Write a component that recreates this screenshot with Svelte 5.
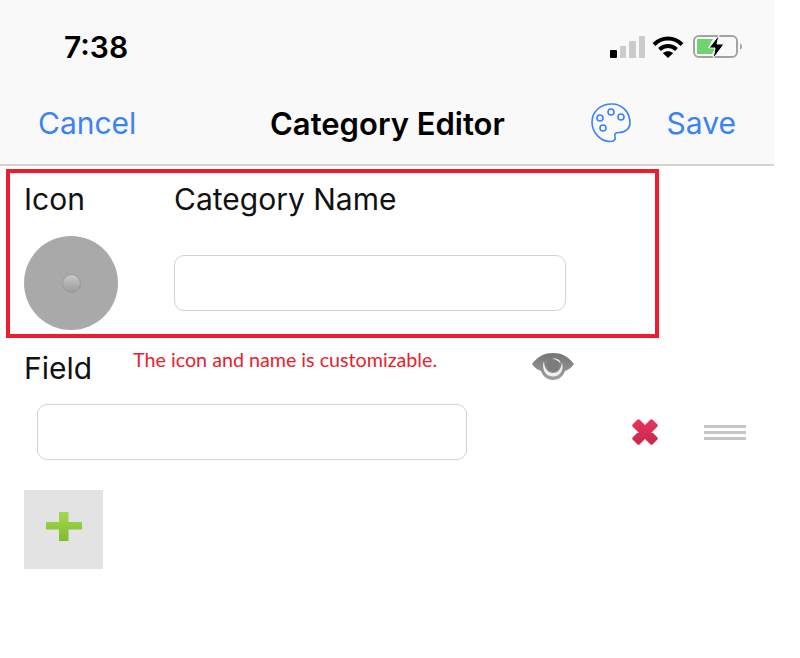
<script lang="ts">
	const signalBars = [
		{ height: 8, on: true },
		{ height: 12, on: false },
		{ height: 17, on: false },
		{ height: 22, on: false },
	]
</script>

<div class="screen">
	<header class="top">
		<div class="status">
			<span class="time">7:38</span>
			<div class="status-icons">
				<div class="signal">
					{#each signalBars as bar}
						<span class:on={bar.on} style={`height: ${bar.height}px`}></span>
					{/each}
				</div>
				<svg class="wifi" width="32" height="24" viewBox="0 0 32 24">
					<path d="M2 9.500C10 1.500 22 1.500 30 9.500" fill="none" stroke="#000" stroke-width="4" />
					<path d="M7.500 14.500C12.500 9.800 19.500 9.800 24.500 14.500" fill="none" stroke="#000" stroke-width="4" />
					<path d="M11 18.200C14 15.600 18 15.600 21 18.200L16 23Z" fill="#000" />
				</svg>
				<svg class="battery" width="50" height="26" viewBox="0 0 50 26">
					<rect x="1" y="2" width="43" height="21" rx="5" fill="none" stroke="#a3a3a3" stroke-width="2" />
					<path d="M4 5H20L15 14H22L19 20H4Z" fill="#6fd46f" />
					<path d="M47 9.500c1.500 .5 2 1.500 2 3s-.5 2.500-2 3Z" fill="#a3a3a3" />
					<path d="M26 1L16 14H22L20 25L31 10H24Z" fill="#000" stroke="#f9f9f9" stroke-width="1" />
				</svg>
			</div>
		</div>
		<nav class="nav">
			<span class="link">Cancel</span>
			<span class="title">Category Editor</span>
			<div class="nav-right">
				<svg class="palette" width="42" height="40" viewBox="0 0 42 40" fill="none" stroke="#3b82f6" stroke-width="1.600">
					<path d="M22 1C10 1 2 9 2 19C2 30 11 38.500 20 38.500C24.500 38.500 26 36 25 33.500C24 30.500 26 29.500 29 29.500C36 29.500 40 25 40 20C40 9 32 1 22 1Z" />
					<circle cx="21" cy="9" r="3" />
					<circle cx="10" cy="15" r="3" />
					<circle cx="31" cy="14" r="3" />
					<circle cx="13" cy="25" r="3" />
				</svg>
				<span class="link">Save</span>
			</div>
		</nav>
	</header>

	<section class="category">
		<div class="col-icon">
			<div class="label">Icon</div>
			<div class="avatar"><span class="knob"></span></div>
		</div>
		<div class="col-name">
			<div class="label">Category Name</div>
			<input class="input name-input" type="text" />
		</div>
	</section>

	<div class="field-head">
		<span class="label">Field</span>
		<span class="note">The icon and name is customizable.</span>
		<svg class="eye" width="44" height="30" viewBox="0 0 44 30">
			<defs>
				<linearGradient id="eyeFill" x1="0" y1="0" x2="0" y2="1">
					<stop offset="0" stop-color="#747474" />
					<stop offset="1" stop-color="#a0a0a0" />
				</linearGradient>
			</defs>
			<path d="M1 12C7 4 14 1 22 1s15 3 21 11c-3 4-6 6-9 7-2 6-7 9-12 9s-10-3-12-9c-3-1-6-3-9-7Z" fill="url(#eyeFill)" />
			<path d="M13 9C10.500 15 13 24.500 22 24.500C30 24.500 33 17 31 10.500C30 18 26.500 21 22 21C16 21 13 15 13 9Z" fill="#f0f0f0" />
			<path d="M22 6.500C27 6 30 9 29.500 11.500C28 9 25 7.800 22 8Z" fill="#f0f0f0" />
			<circle cx="22" cy="13.500" r="6.500" fill="#7d7d7d" />
		</svg>
	</div>

	<div class="field-row">
		<input class="input field-input" type="text" />
		<svg class="remove" width="28" height="28" viewBox="0 0 28 28">
			<defs>
				<linearGradient id="xFill" x1="0" y1="0" x2="0" y2="1">
					<stop offset="0" stop-color="#e5345a" />
					<stop offset="1" stop-color="#c9284f" />
				</linearGradient>
			</defs>
			<path d="M3 7.500L7.500 3L14 9.500L20.500 3L25 7.500L18.500 14L25 20.500L20.500 25L14 18.500L7.500 25L3 20.500L9.500 14Z" fill="url(#xFill)" stroke="url(#xFill)" stroke-width="3.500" stroke-linejoin="round" />
		</svg>
		<div class="handle"><span></span><span></span><span></span></div>
	</div>

	<button class="add" type="button" aria-label="Add field">
		<svg width="38" height="32" viewBox="0 0 38 32">
			<defs>
				<linearGradient id="plusFill" x1="0" y1="0" x2="0" y2="1">
					<stop offset="0" stop-color="#a3d94f" />
					<stop offset="1" stop-color="#80bb30" />
				</linearGradient>
			</defs>
			<path d="M14 1H23.500V11H37V18.500H23.500V30H14V18.500H1V11H14Z" fill="url(#plusFill)" />
		</svg>
	</button>
</div>

<style>
	:global(body) {
		margin: 0;
		background: #fff;
	}

	.screen {
		width: 800px;
		height: 658px;
		overflow: hidden;
		font-family: Inter, 'Liberation Sans', sans-serif;
		color: #111;
	}

	.top {
		width: 774px;
		height: 166px;
		box-sizing: border-box;
		background: #f9f9f9;
		border-bottom: 2px solid #d4d4d4;
	}

	.status {
		display: flex;
		align-items: center;
		justify-content: space-between;
		height: 93px;
		padding: 0 31px 0 64px;
		box-sizing: border-box;
	}

	.time {
		font-size: 30px;
		font-weight: 600;
		color: #000;
	}

	.status-icons {
		display: flex;
		align-items: center;
	}

	.signal {
		display: flex;
		align-items: flex-end;
		gap: 3px;
		margin-right: 7px;
	}

	.wifi {
		margin-right: 9px;
	}

	.signal span {
		width: 6.500px;
		background: #cbcbcb;
		border-radius: 1px;
	}

	.signal span.on {
		background: #000;
	}

	.nav {
		display: flex;
		align-items: center;
		justify-content: space-between;
		height: 60px;
		padding: 0 38px;
		position: relative;
	}

	.link {
		font-size: 30px;
		color: #3b82f6;
	}

	.title {
		position: absolute;
		left: 270px;
		font-size: 31px;
		font-weight: 600;
		color: #000;
	}

	.nav-right {
		display: flex;
		align-items: center;
		gap: 35px;
	}

	.category {
		display: flex;
		width: 653px;
		height: 169px;
		box-sizing: border-box;
		margin: 3px 0 0 6px;
		padding: 8px 0 0 14px;
		gap: 56px;
		border: 4px solid #ed1c2e;
	}

	.col-icon {
		width: 94px;
	}

	.label {
		font-size: 30px;
		line-height: 36px;
		color: #111;
	}

	.avatar {
		display: flex;
		align-items: center;
		justify-content: center;
		width: 94px;
		height: 94px;
		margin-top: 19px;
		border-radius: 50%;
		background: #a9a9a9;
	}

	.knob {
		width: 19px;
		height: 19px;
		border-radius: 50%;
		background: linear-gradient(#c8c8c8, #9c9c9c);
		border: 1px solid #999;
		box-sizing: border-box;
	}

	.input {
		display: block;
		box-sizing: border-box;
		height: 56px;
		border: 1px solid #d3d3d3;
		border-radius: 10px;
		background: #fff;
		padding: 0;
	}

	.name-input {
		width: 392px;
		margin-top: 38px;
	}

	.field-head {
		position: relative;
		display: flex;
		align-items: center;
		height: 60px;
		padding-left: 24px;
	}

	.note {
		margin-left: 41px;
		margin-top: -18px;
		font-family: Lato, sans-serif;
		font-size: 19.700px;
		color: #e8202e;
	}

	.eye {
		position: absolute;
		left: 531px;
		top: 14px;
	}

	.field-row {
		display: flex;
		align-items: center;
		padding-left: 37px;
		margin-top: 6px;
	}

	.field-input {
		width: 430px;
	}

	.remove {
		margin-left: 164px;
	}

	.handle {
		display: flex;
		flex-direction: column;
		gap: 3px;
		margin-left: 45px;
	}

	.handle span {
		display: block;
		width: 42px;
		height: 3px;
		background: #c6c6c6;
	}

	.add {
		display: flex;
		align-items: center;
		justify-content: center;
		width: 79px;
		height: 79px;
		margin: 30px 0 0 24px;
		border: 0;
		padding: 0 0 6px;
		background: #e3e3e3;
	}
</style>
